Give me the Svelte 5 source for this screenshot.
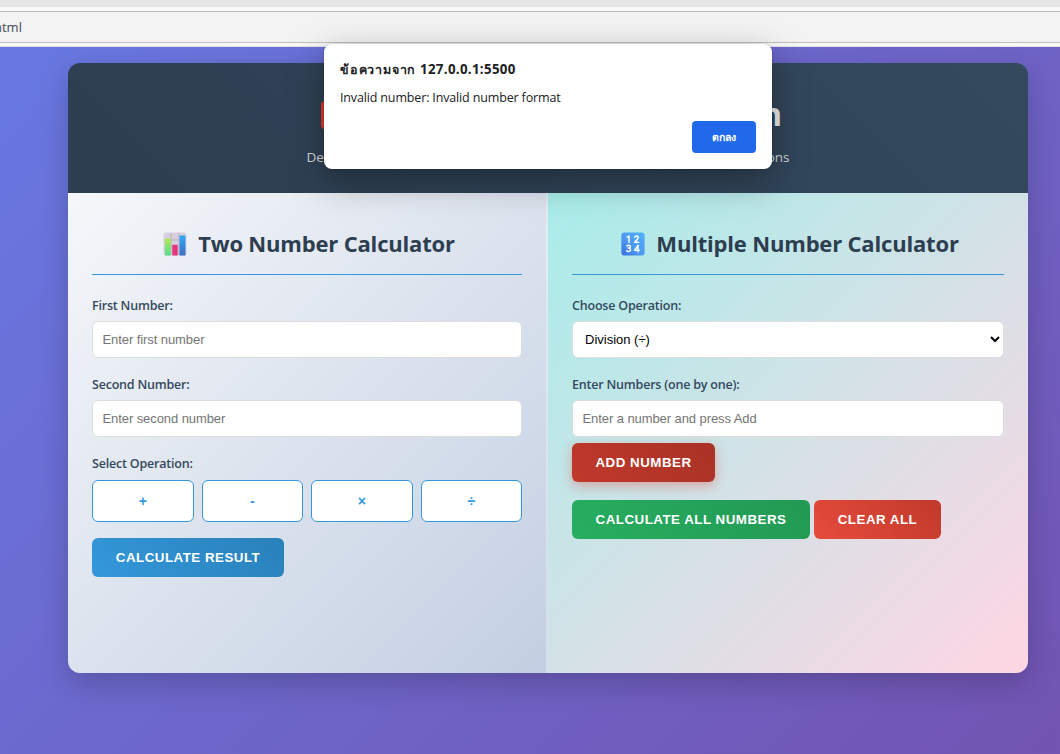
<script>
  const ops = ['+', '-', '×', '÷'];
</script>

<div class="browser">
  <div class="tabs"></div>
  <div class="address"><span>html</span></div>
  <div class="edge"></div>
</div>

<main>
  <div class="card">
    <header>
      <div class="title">
        <svg width="30" height="30" viewBox="0 0 30 30"><rect x="0" y="1" width="28" height="28" rx="4" fill="#e33b30" /></svg>
        <span>n</span>
      </div>
      <div class="subtitle"><span>De</span><span>ons</span></div>
    </header>
    <div class="columns">
      <section class="two">
        <h2>
          <svg width="24" height="24" viewBox="0 0 24 24">
            <defs>
              <linearGradient id="green" x1="0" y1="0" x2="0" y2="1"><stop stop-color="#b4e84f" /><stop offset="1" stop-color="#4fdf8c" /></linearGradient>
              <linearGradient id="blue" x1="0" y1="0" x2="0" y2="1"><stop stop-color="#2fa8f4" /><stop offset="1" stop-color="#3c6fc4" /></linearGradient>
            </defs>
            <rect x=".5" y=".5" width="23" height="23" rx="3" fill="#d7d0de" />
            <path d="M8 1v22M16 1v22M1 8h22M1 16h22" stroke="#b9b0c4" />
            <rect x="2" y="6.5" width="5.7" height="17" rx=".6" fill="url(#green)" />
            <rect x="9.3" y="12.8" width="5.4" height="10.7" rx=".6" fill="#e5337c" />
            <rect x="16.5" y="3.5" width="6" height="20" rx=".6" fill="url(#blue)" />
          </svg>
          <span>Two Number Calculator</span>
        </h2>
        <div class="field">
          <label for="first">First Number:</label>
          <input id="first" placeholder="Enter first number" />
        </div>
        <div class="field">
          <label for="second">Second Number:</label>
          <input id="second" placeholder="Enter second number" />
        </div>
        <div class="field">
          <div class="label">Select Operation:</div>
          <div class="ops">
            {#each ops as op}<button class="op">{op}</button>{/each}
          </div>
        </div>
        <button class="btn calc">Calculate Result</button>
      </section>
      <section class="many">
        <h2>
          <svg width="24" height="24" viewBox="0 0 24 24">
            <defs>
              <linearGradient id="keys" x1="1" y1="0" x2="0" y2="1"><stop stop-color="#50b2fc" /><stop offset=".6" stop-color="#4c96f2" /><stop offset="1" stop-color="#396ddd" /></linearGradient>
            </defs>
            <rect x=".4" y=".4" width="23.2" height="23.2" rx="3" fill="url(#keys)" />
            <g fill="none" stroke="#fff" stroke-width="1.5" stroke-linecap="round" stroke-linejoin="round">
              <path d="M6.2 5.2 8 4v6.3M13.8 5.4c.2-2 3.7-1.8 3.5.1-.1 1.5-2.2 2.7-3.5 4.8h3.7" />
              <path d="M6 13.9c1-1 3.5-.8 3.4.8-.1 1.3-1.4 1.4-2.1 1.4 1 0 2.4.4 2.2 1.9-.2 1.9-2.8 1.7-3.7.7M17 19.8v-6.5l-3.3 4.9h4.5" />
            </g>
          </svg>
          <span>Multiple Number Calculator</span>
        </h2>
        <div class="field">
          <label for="op">Choose Operation:</label>
          <select id="op"><option>Division (÷)</option></select>
        </div>
        <div class="field numbers">
          <label for="num">Enter Numbers (one by one):</label>
          <input id="num" placeholder="Enter a number and press Add" />
        </div>
        <button class="btn add">Add Number</button>
        <div class="actions">
          <button class="btn all">Calculate All Numbers</button>
          <button class="btn clear">Clear All</button>
        </div>
      </section>
    </div>
  </div>
</main>

<div class="dialog" role="alertdialog" aria-labelledby="from">
  <div class="from" id="from"><span class="thai">ข้อความจาก</span><span class="host">127.0.0.1:5500</span></div>
  <p>Invalid number: Invalid number format</p>
  <button class="ok"><span>ตกลง</span></button>
</div>

<style>
  :global(body) { margin: 0; overflow: hidden; font-family: "Open Sans", "Noto Sans", sans-serif; }
  * { box-sizing: border-box; }
  .browser { height: 47px; display: flex; flex-direction: column; background: #f9f9f9; }
  .tabs { height: 7px; background: #e7e7e7; }
  .address { height: 32px; margin-top: 4px; border-top: 1px solid #bfbfbf; border-bottom: 1px solid #bfbfbf; background: #f3f3f3; display: flex; align-items: center; overflow: hidden; }
  .address span { margin-left: -6px; font-size: 13px; color: #454b58; line-height: 18px; }
  .edge { margin-top: auto; height: 1px; background: #e2e2e2; }
  main { height: 707px; padding: 16px 32px 0 68px; background: linear-gradient(135deg, #6878e2 0%, #7254b2 100%); }
  .card { width: 960px; height: 610px; border-radius: 12px; overflow: hidden; box-shadow: 0 10px 30px rgba(0, 0, 0, .2); display: flex; flex-direction: column; }
  header { height: 130px; flex: none; background: linear-gradient(45deg, #2c3e50, #34495e); padding-top: 32px; display: flex; flex-direction: column; align-items: center; }
  .title { width: 461px; height: 43px; margin-left: 7px; display: flex; justify-content: space-between; align-items: center; font-size: 32px; font-weight: 700; line-height: 40px; color: #eeeeee; }
  .title svg { margin-top: -3px; }
  .title span { margin-top: -5px; }
  .subtitle { width: 483px; margin-top: 10px; display: flex; justify-content: space-between; font-size: 13.5px; line-height: 19px; color: #d4d8dc; }
  .columns { flex: 1; display: grid; grid-template-columns: 1fr 1fr; }
  section { padding: 24px; }
  .two { background: linear-gradient(135deg, #f5f7fa 0%, #c3cfe2 100%); background-origin: border-box; border-right: 2px solid rgba(255, 255, 255, .3); }
  .many { background: linear-gradient(135deg, #a8edea 0%, #fed6e3 100%); }
  h2 { margin: 0 0 20px; height: 58px; padding: 10px 0 0 4px; border-bottom: 1px solid #3498db; display: flex; justify-content: center; gap: 11px; color: #2c3e50; font-size: 22px; font-weight: 700; line-height: 32px; letter-spacing: -.18px; }
  h2 svg { margin-top: 5px; }
  h2 span { white-space: nowrap; }
  .field { margin-bottom: 16px; }
  label, .label { display: block; height: 26px; padding-top: 1px; font-size: 12.5px; font-weight: 600; line-height: 19px; letter-spacing: -.2px; color: #34495e; white-space: nowrap; }
  input, select { display: block; width: 100%; height: 37px; border: 1px solid #ddd; border-radius: 6px; padding: 0 9.5px; background: #fff; font: 13px "Liberation Sans", Arial, sans-serif; color: #000; outline: none; }
  input { letter-spacing: -.08px; }
  select { padding: 0 8px; }
  .ops { display: grid; grid-template-columns: repeat(4, 1fr); gap: 8px; padding-top: 1px; }
  .op { height: 42px; border: 1px solid #3498db; border-radius: 6px; background: #fff; color: #3498db; font: bold 14px "Liberation Sans", Arial, sans-serif; padding: 0; }
  .btn { display: block; height: 39px; border: 0; border-radius: 6px; padding: 0 0 1px; color: #fff; font: bold 13.33px "Liberation Sans", Arial, sans-serif; letter-spacing: .5px; text-transform: uppercase; white-space: nowrap; }
  .calc { width: 192px; background: linear-gradient(45deg, #3498db, #2980b9); }
  .numbers { margin-bottom: 6px; }
  .add { width: 143px; background: linear-gradient(45deg, #c0392b, #a93226); box-shadow: 0 4px 12px rgba(231, 76, 60, .4); }
  .actions { display: flex; gap: 4px; margin-top: 18px; }
  .all { width: 238px; background: linear-gradient(45deg, #27ae60, #229954); }
  .clear { width: 127px; background: linear-gradient(45deg, #e74c3c, #c0392b); }
  .dialog { position: absolute; left: 324px; top: 44px; width: 448px; height: 125px; border-radius: 8px; background: #fff; padding: 16px; box-shadow: 0 0 2px rgba(0, 0, 0, .25), 0 12px 36px rgba(0, 0, 0, .34); color: #202124; display: flex; flex-direction: column; }
  .from { display: flex; height: 19px; font-weight: 700; line-height: 19px; white-space: nowrap; }
  .thai { width: 80px; font-size: 12.5px; font-weight: 600; letter-spacing: .8px; }
  .host { font-size: 13.3px; letter-spacing: .32px; }
  .dialog p { margin: 9px 0 0; font-size: 12.5px; line-height: 19px; letter-spacing: -.15px; white-space: nowrap; }
  .ok { margin: 14px 0 0 auto; width: 64px; height: 32px; border: 0; border-radius: 4px; background: #2169eb; color: #fff; font: 600 10.5px "Open Sans", sans-serif; flex: none; }
</style>
